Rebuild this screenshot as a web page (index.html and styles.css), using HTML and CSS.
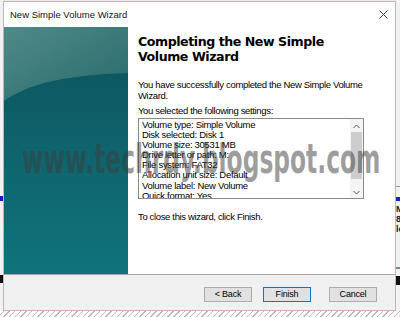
FILE: index.html
```html
<!DOCTYPE html>
<html>
<head>
<meta charset="utf-8">
<link rel="stylesheet" href="styles.css">
</head>
<body>
<div class="desk">
  <div class="bgwin bg-left"><div class="bar-blue"></div><div class="bar-black"></div></div>
  <div class="bgwin bg-right"><div class="bar-line"></div><div class="bar-blue"></div><div class="bg-text">M<br>8<br>le</div><div class="bar-green"></div><div class="bar-black"></div></div>
  <div class="dialog">
    <div class="titlebar">
      <span class="title">New Simple Volume Wizard</span>
      <svg class="close" width="9" height="9" viewBox="0 0 9 9"><path d="M0.5 0.5 L8.5 8.5 M8.5 0.5 L0.5 8.5" stroke="#333" stroke-width="1" fill="none"/></svg>
    </div>
    <div class="main">
      <div class="side">
        <svg width="124" height="247" viewBox="0 0 124 247">
          <defs>
            <linearGradient id="lo" x1="0" y1="0" x2="0" y2="1">
              <stop offset="0" stop-color="#0c525b"/>
              <stop offset="0.45" stop-color="#0e626b"/>
              <stop offset="1" stop-color="#10737c"/>
            </linearGradient>
            <linearGradient id="hi" x1="0" y1="0" x2="1" y2="1">
              <stop offset="0" stop-color="#4f8a88"/>
              <stop offset="1" stop-color="#296a6c"/>
            </linearGradient>
          </defs>
          <rect width="124" height="247" fill="url(#lo)"/>
          <path d="M0 74 C 22 58 58 48 124 46 L124 0 L0 0 Z" fill="url(#hi)"/>
        </svg>
      </div>
      <div class="content">
        <h1 class="heading">Completing the New Simple<br>Volume Wizard</h1>
        <p class="para">You have successfully completed the New Simple Volume Wizard.</p>
        <p class="label">You selected the following settings:</p>
        <div class="listbox">
          <div class="lines">
            <div>Volume type: Simple Volume</div>
            <div>Disk selected: Disk 1</div>
            <div>Volume size: 30531 MB</div>
            <div>Drive letter or path: M:</div>
            <div>File system: FAT32</div>
            <div>Allocation unit size: Default</div>
            <div>Volume label: New Volume</div>
            <div>Quick format: Yes</div>
          </div>
          <div class="scroll">
            <svg class="arrow" width="7" height="5" viewBox="0 0 7 5"><path d="M0.5 4 L3.5 1 L6.5 4" stroke="#555" fill="none"/></svg>
            <div class="track"><div class="thumb"></div></div>
            <svg class="arrow" width="7" height="5" viewBox="0 0 7 5"><path d="M0.5 1 L3.5 4 L6.5 1" stroke="#555" fill="none"/></svg>
          </div>
        </div>
        <p class="close-text">To close this wizard, click Finish.</p>
      </div>
    </div>
    <div class="footer">
      <button class="btn">&lt; Back</button>
      <button class="btn primary">Finish</button>
      <button class="btn last">Cancel</button>
    </div>
  </div>
  <div class="watermark">www.techrdy.blogspot.com</div>
</div>
</body>
</html>
```

FILE: styles.css
```css
html, body {
  margin: 0;
  padding: 0;
}
body {
  width: 400px;
  height: 317px;
  overflow: hidden;
  background: #e9e9e9;
  font-family: "Liberation Sans", Arial, sans-serif;
}
.desk {
  position: relative;
  width: 400px;
  height: 317px;
  padding-top: 1px;
  box-sizing: border-box;
  background:
    repeating-linear-gradient(135deg, #ffffff 0 3px, #b9b9b9 3px 4px) bottom / 100% 7px no-repeat,
    #ececec;
}
.bgwin {
  position: absolute;
  top: 0;
  height: 311px;
  background: #f2f2f2;
}
.bg-left {
  left: 0;
  width: 3px;
}
.bg-right {
  right: 0;
  width: 4px;
}
.bgwin div {
  position: absolute;
  left: 0;
  right: 0;
}
.bg-left .bar-blue { top: 196px; height: 5px; background: #1a1acb; }
.bg-left .bar-black { top: 275px; height: 8px; background: #111; }
.bg-right .bar-line { top: 186px; height: 1px; background: #999; }
.bg-right .bar-blue { top: 197px; height: 4px; background: #1b1bd0; }
.bg-right .bg-text {
  top: 204px;
  font-size: 9px;
  line-height: 10px;
  color: #222;
  font-weight: bold;
  overflow: hidden;
}
.bg-right .bar-green { top: 267px; height: 2px; background: #6a9a6a; }
.bg-right .bar-black { top: 276px; height: 9px; background: #111; }
.dialog {
  position: relative;
  margin-left: 3px;
  width: 393px;
  height: 310px;
  box-sizing: border-box;
  border: 1px solid #dca6bf;
  background: #fff;
  display: flex;
  flex-direction: column;
}
.titlebar {
  height: 24px;
  flex: none;
  display: flex;
  align-items: center;
  justify-content: space-between;
  padding: 0 7px 1px 6px;
}
.title {
  font-size: 9.5px;
  color: #111;
}
.close {
  display: block;
}
.main {
  height: 247px;
  flex: none;
  display: flex;
}
.side {
  width: 124px;
  flex: none;
}
.side svg {
  display: block;
}
.content {
  flex: 1;
  padding: 8px 0 0 10px;
  font-size: 9.5px;
  color: #000;
}
.heading {
  margin: 0;
  font-family: "DejaVu Sans", Verdana, sans-serif;
  font-weight: bold;
  font-size: 12.6px;
  letter-spacing: -0.45px;
  line-height: 14.5px;
  color: #000;
  white-space: nowrap;
}
.para {
  margin: 15px 0 0;
  width: 226px;
  line-height: 11px;
  letter-spacing: -0.35px;
}
.label {
  margin: 4px 0 0;
  line-height: 11px;
  letter-spacing: -0.35px;
}
.listbox {
  margin-top: 2px;
  width: 226px;
  height: 81px;
  box-sizing: border-box;
  border: 1px solid #8a8a8a;
  display: flex;
  overflow: hidden;
}
.lines {
  flex: 1;
  padding: 1px 0 0 3px;
  line-height: 10.1px;
  letter-spacing: -0.3px;
  white-space: nowrap;
}
.scroll {
  width: 13px;
  flex: none;
  background: #f4f4f4;
  display: flex;
  flex-direction: column;
  align-items: center;
  padding: 5px 0 3px;
  box-sizing: border-box;
}
.arrow {
  display: block;
  flex: none;
}
.track {
  flex: 1;
  width: 100%;
  padding: 3px 1px 7px;
  box-sizing: border-box;
}
.thumb {
  height: 47px;
  background: #cdcdcd;
}
.close-text {
  margin: 12px 0 0;
  line-height: 11px;
  letter-spacing: -0.35px;
}
.footer {
  flex: 1;
  border-top: 1px solid #a8a8a8;
  background: #f0f0f0;
  display: flex;
  justify-content: flex-end;
  align-items: flex-start;
  padding: 12px 18px 0 0;
  gap: 11px;
}
.btn {
  width: 48px;
  height: 15px;
  padding: 0;
  margin: 0;
  border: 1px solid #adadad;
  background: #e1e1e1;
  font-family: "Liberation Sans", Arial, sans-serif;
  font-size: 9px;
  letter-spacing: -0.2px;
  color: #000;
  line-height: 13px;
}
.btn.primary {
  border-color: #0078d7;
}
.btn.last {
  margin-left: 7px;
}
.watermark {
  position: absolute;
  left: 22px;
  top: 136px;
  font-family: "DejaVu Sans", Verdana, sans-serif;
  font-weight: bold;
  font-size: 41px;
  line-height: 46px;
  color: rgba(60, 60, 60, 0.5);
  transform: scaleX(0.57);
  transform-origin: left top;
  white-space: nowrap;
  pointer-events: none;
}
```
